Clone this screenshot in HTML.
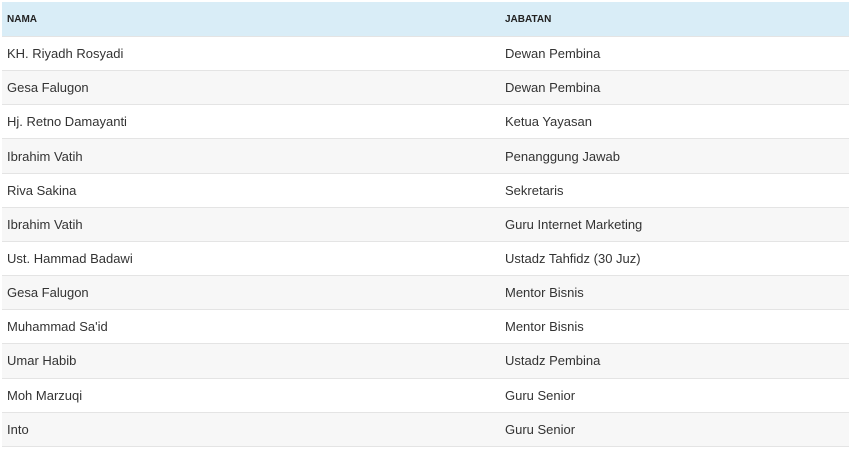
<!DOCTYPE html><html><head><style>
body{margin:0;background:#fff;font-family:"Liberation Sans",sans-serif;}
table{position:absolute;left:2px;top:2px;width:847px;border-collapse:collapse;table-layout:fixed;}
th{background:#d9edf7;height:34px;text-align:left;font-size:10px;font-weight:bold;color:#222;padding:0 0 0 5px;}
td{height:33.17px;border-top:1px solid #e4e4e4;font-size:13px;color:#333;padding:0 0 0 5px;}
tr:nth-child(even) td{background:#f7f7f7;}
tbody tr:last-child td{border-bottom:1px solid #e4e4e4;}
</style></head><body><table>
<thead><tr><th style="width:493px">NAMA</th><th>JABATAN</th></tr></thead><tbody>
<tr><td>KH. Riyadh Rosyadi</td><td>Dewan Pembina</td></tr>
<tr><td>Gesa Falugon</td><td>Dewan Pembina</td></tr>
<tr><td>Hj. Retno Damayanti</td><td>Ketua Yayasan</td></tr>
<tr><td>Ibrahim Vatih</td><td>Penanggung Jawab</td></tr>
<tr><td>Riva Sakina</td><td>Sekretaris</td></tr>
<tr><td>Ibrahim Vatih</td><td>Guru Internet Marketing</td></tr>
<tr><td>Ust. Hammad Badawi</td><td>Ustadz Tahfidz (30 Juz)</td></tr>
<tr><td>Gesa Falugon</td><td>Mentor Bisnis</td></tr>
<tr><td>Muhammad Sa'id</td><td>Mentor Bisnis</td></tr>
<tr><td>Umar Habib</td><td>Ustadz Pembina</td></tr>
<tr><td>Moh Marzuqi</td><td>Guru Senior</td></tr>
<tr><td>Into</td><td>Guru Senior</td></tr>
</tbody></table></body></html>
